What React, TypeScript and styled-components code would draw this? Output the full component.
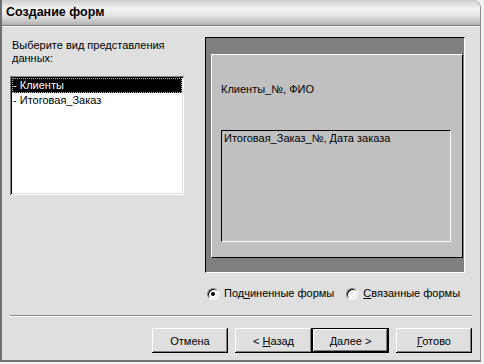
import React from "react";
import styled, { createGlobalStyle } from "styled-components";

const GlobalStyle = createGlobalStyle`
  html, body { margin: 0; padding: 0; background: #f3f3f3; }
  body {
    font-family: "Liberation Sans", Arial, sans-serif;
    font-size: 11px;
    color: #000;
  }
  * { box-sizing: border-box; }
`;

const Window = styled.div`
  width: 481px;
  height: 362px;
  display: flex;
  flex-direction: column;
  background: #dfdfdf;
  border-left: 2px solid #6e6e6e;
  border-right: 1px solid #8c8c8c;
  border-bottom: 2px solid #6e6e6e;
  border-top-right-radius: 8px;
  overflow: hidden;
`;

const TitleBar = styled.div`
  height: 26px;
  flex: none;
  display: flex;
  align-items: center;
  padding: 0 0 1px 4px;
  background: linear-gradient(180deg, #cdcdcd 0%, #f4f4f4 35%, #e4e4e4 62%, #b2b2b2 100%);
  border-bottom: 1px solid #7a7a7a;
  font-weight: bold;
  font-size: 12.5px;
`;

const Body = styled.div`
  flex: 1;
  display: flex;
  flex-direction: column;
  padding: 10px 8px 0 8px;
  border-top: 1px solid #f6f6f6;
`;

const Main = styled.div`
  display: flex;
  gap: 21px;
`;

const LeftCol = styled.div`
  width: 174px;
  display: flex;
  flex-direction: column;
`;

const Prompt = styled.div`
  margin-top: 2px;
  line-height: 13px;
  padding-left: 2px;
`;

const ListBox = styled.div`
  margin-top: 11px;
  height: 119px;
  background: #fff;
  padding: 2px;
  box-shadow: inset 1px 1px #808080, inset -1px -1px #fff, inset 2px 2px #000,
    inset -2px -2px #dfdfdf;
`;

const ListItem = styled.div<{ $selected?: boolean }>`
  height: 15px;
  line-height: 14px;
  padding-left: 1px;
  white-space: nowrap;
  background: ${(p) => (p.$selected ? "#000" : "transparent")};
  color: ${(p) => (p.$selected ? "#fff" : "#000")};
  outline: ${(p) => (p.$selected ? "1px dotted #bbb" : "none")};
  outline-offset: -1px;
`;

const PreviewFrame = styled.div`
  width: 260px;
  height: 236px;
  display: flex;
  background: #808080;
  border: 1px solid;
  border-color: #000 #fff #fff #000;
  padding: 16px 1px 14px 5px;
`;

const FormPanel = styled.div`
  flex: 1;
  display: flex;
  flex-direction: column;
  background: #c0c0c0;
  border: 1px solid;
  border-color: #fff #000 #000 #fff;
  padding: 28px 11px 15px 9px;
`;

const FieldText = styled.div`
  line-height: 13px;
  white-space: nowrap;
`;

const SubForm = styled.div`
  flex: 1;
  margin-top: 34px;
  background: #c0c0c0;
  border: 1px solid;
  border-color: #000 #fff #fff #000;
  padding: 1px 2px;
  line-height: 13px;
  white-space: nowrap;
`;

const RadioRow = styled.div`
  margin-top: 14px;
  margin-left: 197px;
  height: 13px;
  display: flex;
  align-items: center;
  gap: 12px;
`;

const RadioItem = styled.label`
  display: flex;
  align-items: center;
  gap: 5px;
  line-height: 13px;
  white-space: nowrap;
`;

const RadioCircle = styled.span<{ $checked?: boolean }>`
  position: relative;
  width: 12px;
  height: 12px;
  border-radius: 50%;
  background: #fff;
  border: 1px solid;
  border-color: #808080 #fff #fff #808080;
  box-shadow: inset 1px 1px #000, inset -1px -1px #dfdfdf;
  &::after {
    content: "";
    display: ${(p) => (p.$checked ? "block" : "none")};
    position: absolute;
    left: 3px;
    top: 3px;
    width: 4px;
    height: 4px;
    border-radius: 50%;
    background: #000;
  }
`;

const Separator = styled.div`
  margin-top: 15px;
  height: 2px;
  border-top: 1px solid #8a8a8a;
  border-bottom: 1px solid #fff;
`;

const ButtonRow = styled.div`
  margin-top: 11px;
  display: flex;
  justify-content: flex-end;
`;

const Button = styled.button<{ $default?: boolean; $gap?: number; $w?: number }>`
  width: ${(p) => p.$w ?? 76}px;
  height: 25px;
  margin-left: ${(p) => p.$gap ?? 0}px;
  padding: 0;
  font-family: "Liberation Sans", Arial, sans-serif;
  font-size: 11px;
  color: #000;
  background: #dfdfdf;
  border: ${(p) => (p.$default ? "1px solid #000" : "none")};
  box-shadow: inset -1px -1px #000, inset 1px 1px #fff, inset -2px -2px #808080,
    inset 2px 2px #dfdfdf;
`;

export default function App() {
  return (
    <>
      <GlobalStyle />
      <Window>
        <TitleBar>Создание форм</TitleBar>
        <Body>
          <Main>
            <LeftCol>
              <Prompt>
                Выберите вид представления
                <br />
                данных:
              </Prompt>
              <ListBox>
                <ListItem $selected>- Клиенты</ListItem>
                <ListItem>- Итоговая_Заказ</ListItem>
              </ListBox>
            </LeftCol>
            <PreviewFrame>
              <FormPanel>
                <FieldText>Клиенты_№, ФИО</FieldText>
                <SubForm>Итоговая_Заказ_№, Дата заказа</SubForm>
              </FormPanel>
            </PreviewFrame>
          </Main>
          <RadioRow>
            <RadioItem>
              <RadioCircle $checked />
              <span>
                Под<u>ч</u>иненные формы
              </span>
            </RadioItem>
            <RadioItem>
              <RadioCircle />
              <span>
                <u>С</u>вязанные формы
              </span>
            </RadioItem>
          </RadioRow>
          <Separator />
          <ButtonRow>
            <Button>Отмена</Button>
            <Button $gap={7} $w={77}>
              &lt; <u>Н</u>азад
            </Button>
            <Button $default $w={77}>
              <u>Д</u>алее &gt;
            </Button>
            <Button $gap={7}>
              <u>Г</u>отово
            </Button>
          </ButtonRow>
        </Body>
      </Window>
    </>
  );
}
